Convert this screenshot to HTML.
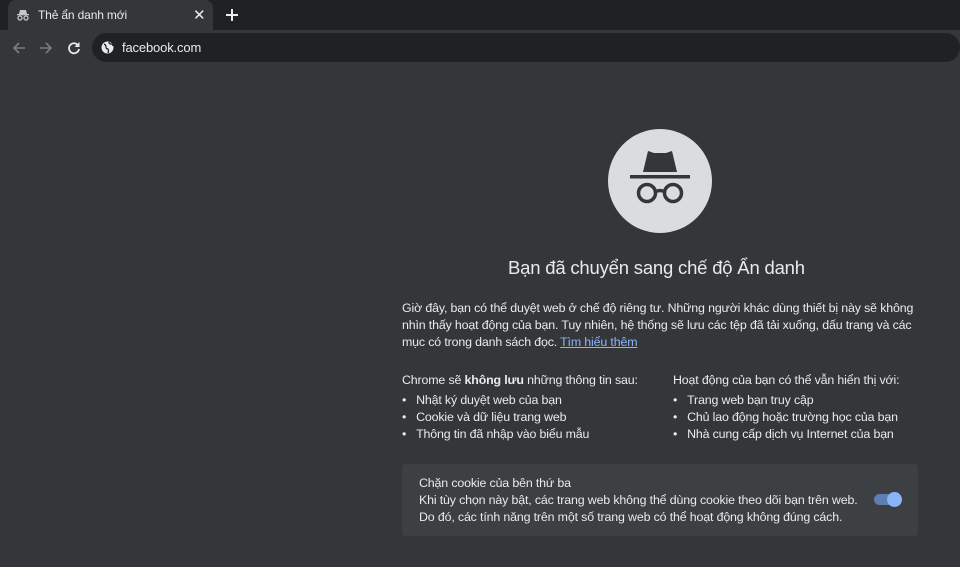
<!DOCTYPE html>
<html><head><meta charset="utf-8"><style>
*{margin:0;padding:0;box-sizing:border-box}
body{width:960px;height:567px;background:#35363a;font-family:"Liberation Sans","DejaVu Sans",sans-serif;color:#e8eaed;position:relative;overflow:hidden}
.a{position:absolute;white-space:nowrap;font-size:12.4px;letter-spacing:-0.15px}
#tabbar{position:absolute;left:0;top:0;width:960px;height:30px;background:#202124}
#tab{position:absolute;left:8px;top:0;width:205px;height:30px;background:#35363a;border-radius:8px 8px 0 0}
#omni{position:absolute;left:92px;top:33px;width:868px;height:29px;background:#202124;border-radius:15px}
#card{position:absolute;left:402px;top:464px;width:516px;height:72px;background:#3c4043;border-radius:4px}
</style></head><body>
<div id="tabbar"></div>
<div id="tab"></div>
<svg style="position:absolute;left:16px;top:8px" width="14" height="14" viewBox="0 0 14 14" fill="#c4c7c9"><path d="M4 2h6l1 4H3z"/><rect x="1" y="6" width="12" height="1.3"/><circle cx="4" cy="10" r="2" fill="none" stroke="#c4c7c9" stroke-width="1.3"/><circle cx="10" cy="10" r="2" fill="none" stroke="#c4c7c9" stroke-width="1.3"/></svg>
<div class="a" style="left:38px;top:8px;font-size:12px">Thẻ ẩn danh mới</div>
<div class="a" style="left:193px;top:6px;font-size:15px;color:#e8eaed">✕</div>
<svg style="position:absolute;left:225px;top:8px" width="14" height="14"><path d="M7 1v12M1 7h12" stroke="#e8eaed" stroke-width="2"/></svg>
<svg style="position:absolute;left:11px;top:40px" width="16" height="16"><path d="M14 8H3M8 3L3 8l5 5" stroke="#7a7c7f" stroke-width="1.6" fill="none"/></svg>
<svg style="position:absolute;left:38px;top:40px" width="16" height="16"><path d="M2 8h11M8 3l5 5-5 5" stroke="#7a7c7f" stroke-width="1.6" fill="none"/></svg>
<svg style="position:absolute;left:66px;top:40px" width="16" height="16"><path d="M12.5 6A5 5 0 1 0 13 9" stroke="#e8eaed" stroke-width="1.8" fill="none"/><path d="M13.5 2v5h-5z" fill="#e8eaed"/></svg>
<div id="omni"></div>
<svg style="position:absolute;left:101px;top:41px" width="13" height="13" viewBox="0 0 13 13"><circle cx="6.5" cy="6.5" r="6" fill="#e8eaed"/><path d="M3 3q2 1 2 3t2 2q1 2 0 4M8 1q0 2 2 2t2 2" stroke="#202124" stroke-width="1.3" fill="none"/></svg>
<div class="a" style="left:122px;top:40px;font-size:13px">facebook.com</div>
<svg style="position:absolute;left:608px;top:129px" width="104" height="104" viewBox="0 0 104 104"><circle cx="52" cy="52" r="52" fill="#dadce0"/><path d="M40 22l6 2h12l6-2 5 21H35z" fill="#35363a"/><rect x="22" y="46" width="60" height="3.5" fill="#35363a"/><circle cx="39" cy="64" r="8.5" fill="none" stroke="#35363a" stroke-width="3.5"/><circle cx="65" cy="64" r="8.5" fill="none" stroke="#35363a" stroke-width="3.5"/><path d="M47 63q5-3 10 0" stroke="#35363a" stroke-width="3.5" fill="none"/></svg>
<div class="a" style="left:508px;top:257px;font-size:18.5px;letter-spacing:-0.2px">Bạn đã chuyển sang chế độ Ẩn danh</div>
<div class="a" style="left:402px;top:301px">Giờ đây, bạn có thể duyệt web ở chế độ riêng tư. Những người khác dùng thiết bị này sẽ không</div>
<div class="a" style="left:402px;top:318px">nhìn thấy hoạt động của bạn. Tuy nhiên, hệ thống sẽ lưu các tệp đã tải xuống, dấu trang và các</div>
<div class="a" style="left:402px;top:335px">mục có trong danh sách đọc. <span style="color:#8ab4f8;text-decoration:underline">Tìm hiểu thêm</span></div>
<div class="a" style="left:402px;top:373px">Chrome sẽ <span style="font-weight:600">không lưu</span> những thông tin sau:</div>
<div class="a" style="left:402px;top:393px">•&nbsp;&nbsp;&nbsp;Nhật ký duyệt web của bạn</div>
<div class="a" style="left:402px;top:410px">•&nbsp;&nbsp;&nbsp;Cookie và dữ liệu trang web</div>
<div class="a" style="left:402px;top:427px">•&nbsp;&nbsp;&nbsp;Thông tin đã nhập vào biểu mẫu</div>
<div class="a" style="left:673px;top:373px">Hoạt động của bạn có thể vẫn hiển thị với:</div>
<div class="a" style="left:673px;top:393px">•&nbsp;&nbsp;&nbsp;Trang web bạn truy cập</div>
<div class="a" style="left:673px;top:410px">•&nbsp;&nbsp;&nbsp;Chủ lao động hoặc trường học của bạn</div>
<div class="a" style="left:673px;top:427px">•&nbsp;&nbsp;&nbsp;Nhà cung cấp dịch vụ Internet của bạn</div>
<div id="card"></div>
<div class="a" style="left:419px;top:476px">Chặn cookie của bên thứ ba</div>
<div class="a" style="left:419px;top:493px">Khi tùy chọn này bật, các trang web không thể dùng cookie theo dõi bạn trên web.</div>
<div class="a" style="left:419px;top:510px">Do đó, các tính năng trên một số trang web có thể hoạt động không đúng cách.</div>
<div style="position:absolute;left:874px;top:494px;width:26px;height:11px;border-radius:6px;background:#5f7eb3"></div>
<div style="position:absolute;left:887px;top:492px;width:15px;height:15px;border-radius:50%;background:#8ab4f8"></div>
</body></html>
